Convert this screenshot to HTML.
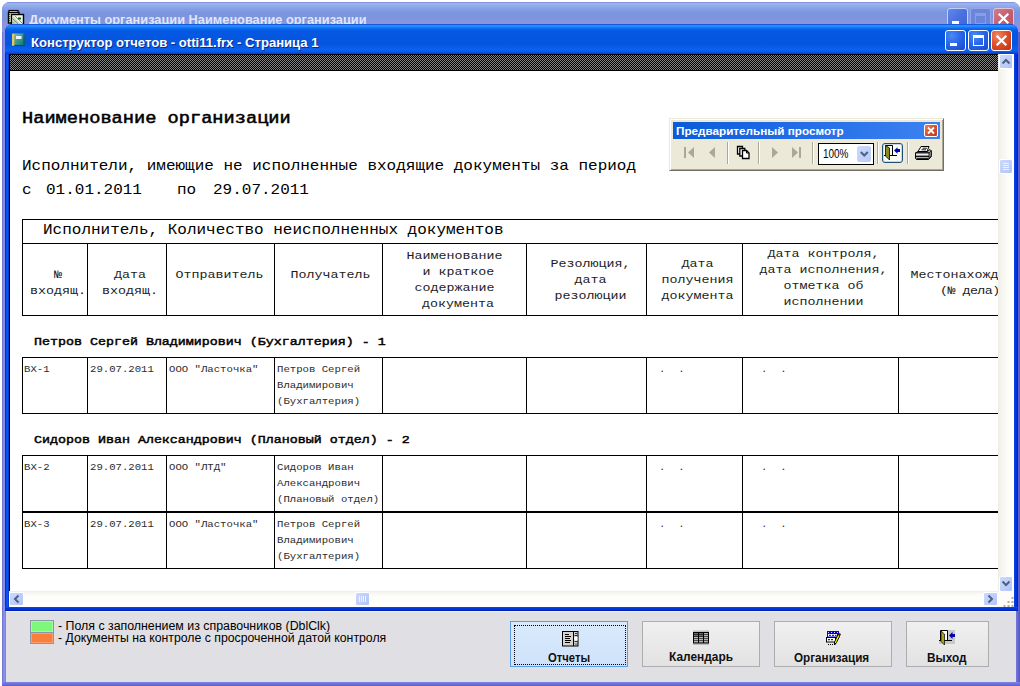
<!DOCTYPE html>
<html lang="ru">
<head>
<meta charset="utf-8">
<title>Конструктор отчетов</title>
<style>
html,body{margin:0;padding:0;background:#fff;}
body{width:1020px;height:686px;overflow:hidden;position:relative;font-family:"Liberation Sans",sans-serif;}
div,span{position:absolute;box-sizing:border-box;}
.tx{white-space:nowrap;transform-origin:0 0;line-height:1;}
.mono{font-family:"Liberation Mono",monospace;color:#000;}
/* outer window */
#ow{left:2px;top:2px;width:1018px;height:684px;border-radius:8px 8px 0 0;
 background:linear-gradient(90deg,#6a70c8 0,#8b93f0 2px,#7b80e6 4px,#7b80e6 100%);overflow:hidden;}
#owt{left:0;top:0;width:1018px;height:30px;background:linear-gradient(180deg,#7b84da 0,#9cb3ec 1.5px,#98b0ec 3px,#86a3e6 6px,#7b97e0 10px,#7d94de 16px,#8a94dc 22px,#8a94dc 30px);}
#owc{left:4px;top:609px;width:1010px;height:71px;background:#e0dfe3;}
/* inner window */
#iw{left:5px;top:24px;width:1013px;height:587px;border-radius:8px 8px 0 0;background:#0831d9;overflow:hidden;}
#iwt{left:0;top:0;width:1013px;height:30px;background:linear-gradient(180deg,#0a40c8 0,#2a8eff 1.5px,#2388fc 2.5px,#0a6af0 4.5px,#0558e2 7px,#0455df 20px,#0860ee 25px,#0a5ff0 27px,#0a48d8 29px,#0838c0 30px);}
#iwl{left:0;top:30px;width:4px;height:557px;background:linear-gradient(90deg,#0020d8 0,#0c5cee 2px,#0b4fe2 3px,#0030c8 4px);}
#iwr{left:1009px;top:30px;width:4px;height:557px;background:linear-gradient(90deg,#0c48e6 0,#0038e0 1.5px,#0030d4 2.8px,#001898 4px);}
#iwb{left:0;top:583px;width:1013px;height:4px;background:linear-gradient(180deg,#0c48e6 0,#0038e0 1.5px,#0030d4 2.8px,#001898 4px);}
#cl{left:9px;top:54px;width:1005px;height:553px;background:#fff;overflow:hidden;}

#rp{left:9px;top:54px;width:989px;height:537px;background:#fff;overflow:hidden;}
#rpi{left:-9px;top:-54px;width:1200px;height:686px;}
#band{left:9px;top:54px;width:989px;height:17px;background:repeating-conic-gradient(#000 0 25%,#828282 0 50%) 0 0/2px 2px;border-bottom:1px solid #000;border-top:1px solid #000;}
#lline{left:9px;top:54px;width:1px;height:537px;background:#000;}
.ln{background:#000;}
.f14{font-size:18.67px;font-weight:bold;}
.f12{font-size:16px;}
.f10{font-size:13.33px;}
.f10b{font-size:13.33px;font-weight:bold;}
.f8{font-size:10.67px;}
.hc{text-align:center;line-height:16px;white-space:pre;color:#1c1c1c;}
.dc{line-height:16px;white-space:pre;color:#2c2c2c;}

.cb{width:21px;height:21px;border:1px solid #fff;border-radius:3px;}
.cbb{background:radial-gradient(circle at 30% 25%,#4a8af8 0,#2a66e8 45%,#1848d0 100%);}
.cbr{background:radial-gradient(circle at 30% 25%,#f08868 0,#e0502a 45%,#c03010 100%);}
.cbbi{background:linear-gradient(135deg,#6088ec 0,#4a70e0 50%,#3f64d8 100%);border-color:#c2cff5;}
.cbri{background:linear-gradient(135deg,#d07c90 0,#c85c6c 55%,#c05262 100%);border-color:#e2c6d8;}
.ttl{font-weight:bold;font-size:13px;color:#fff;}
/* scrollbars */
#vs{left:998px;top:54px;width:16px;height:537px;background:linear-gradient(90deg,#eeede5 0,#f6f5f0 4px,#fefefb 12px,#fff 16px);}
#hs{left:9px;top:591px;width:989px;height:16px;background:linear-gradient(180deg,#ecebe4 0,#f8f7f2 2px,#fdfdfa 6px,#fefefc 16px);}
#grip{left:998px;top:591px;width:16px;height:16px;background:#fdfcf8;}
.sb{width:15px;height:15px;border-radius:2px;border:1px solid #fff;background:linear-gradient(135deg,#cbd9fd 0,#bccdfb 60%,#b0c3f6 100%);}
.sb svg{position:absolute;left:0;top:0;}

/* preview toolbar */
#tb{left:669px;top:118px;width:275px;height:53px;background:#ece9d8;border:1px solid;border-color:#ece9d8 #716f64 #716f64 #ece9d8;box-shadow:inset 1px 1px 0 #fff,inset -1px -1px 0 #aca899;}
#tbt{left:3px;top:3px;width:267px;height:17px;background:linear-gradient(90deg,#0a5cd8 0,#1f6ae6 40%,#3d82f0 100%);}
.sep{width:2px;height:22px;top:23px;border-left:1px solid #aca899;border-right:1px solid #fff;}
/* bottom panel */
.btn{top:621px;height:46px;border:1px solid #adadad;background:linear-gradient(180deg,#f0f0f0 0,#e9e9e9 50%,#e2e2e2 100%);}
.btn .bl{font-weight:bold;font-size:12px;color:#111;white-space:nowrap;line-height:1;transform-origin:0 0;}
.lg{font-size:12px;color:#000;}
</style>
</head>
<body>
<div id="ow">
 <div id="owt"></div>
 <div id="owc"></div>
 <div style="left:1014px;top:30px;width:4px;height:654px;background:linear-gradient(90deg,#7479dc 0,#6468d0 2px,#5254c2 4px)"></div>
 <div style="left:0;top:680px;width:1018px;height:4px;background:linear-gradient(180deg,#7b80e6 0,#6c72d8 2px,#5a5ecc 4px)"></div>
</div>

<!-- outer window caption -->
<svg style="position:absolute;left:7px;top:9px" width="18" height="16" viewBox="0 0 18 16">
 <rect x="2" y="1.500" width="9" height="4" fill="#f4f0d8" stroke="#000" stroke-width="1.2"/>
 <rect x="1.500" y="3.500" width="10.500" height="10.500" fill="#e8f0d8" stroke="#000" stroke-width="1.4"/>
 <path d="M2.500 5v8" stroke="#1a6a1a" stroke-width="1.200" stroke-dasharray="1 1"/>
 <rect x="4.500" y="5.500" width="12" height="10.500" fill="#eef6e4" stroke="#000" stroke-width="1.400"/>
 <path d="M5.500 8l8 8M5.500 11l5 5" stroke="#e8b8c8" stroke-width="1.500"/>
 <path d="M5.500 9.500l6.500 6.500M8 7l8 8M5.500 13l3 3" stroke="#58b058" stroke-width="1"/>
 <rect x="11" y="8.500" width="3" height="2" fill="#0a6a1a"/>
</svg>
<div class="tx ttl" id="t1" style="left:29px;top:13px;color:#dfe6fa;transform:scaleX(.984)">Документы организации Наименование организации</div>
<div class="cb cbbi" style="left:947px;top:8px"><div style="left:4px;top:12px;width:7px;height:3px;background:#fff"></div></div>
<div class="cb cbbi" style="left:970px;top:8px;background:#6a85dc;border-color:#94a6e8"><div style="left:4px;top:4px;width:11px;height:11px;border:1px solid #8a9de4;border-top-width:3px"></div></div>
<div class="cb cbri" style="left:993px;top:8px"><svg style="position:absolute;left:0;top:0" width="19" height="19"><path d="M4.700 4.700l9.600 9.600M14.300 4.700l-9.600 9.600" stroke="#fff" stroke-width="2.2"/></svg></div>
<div style="left:6px;top:611px;width:1010px;height:1px;background:#f0f0f8"></div>
<div id="iw">
 <div id="iwt"></div>
 <div id="iwl"></div><div id="iwr"></div><div id="iwb"></div>
</div>

<!-- inner window caption -->
<svg style="position:absolute;left:12px;top:33px" width="13" height="13" viewBox="0 0 13 13">
 <defs><linearGradient id="gi" x1="0" y1="0" x2="1" y2="1"><stop offset="0" stop-color="#8ab8d8"/><stop offset="0.45" stop-color="#3a9aa0"/><stop offset="1" stop-color="#0a7a50"/></linearGradient></defs>
 <rect x="2" y="0.500" width="10.500" height="12" fill="url(#gi)"/>
 <path d="M12 1v12M2 12.500h10.500" stroke="#0a4a5a" stroke-width="1"/>
 <rect x="0" y="0.500" width="2.500" height="12" fill="#c8b828"/>
 <path d="M1 1.500v11" stroke="#fff" stroke-width="1.200" stroke-dasharray="1 1"/>
 <rect x="4" y="3" width="5.500" height="3" fill="#eef0f8"/>
</svg>
<div class="tx ttl" id="t2" style="left:31px;top:35.500px;text-shadow:1px 1px 0 #0a2a90;transform:scaleX(1.007)">Конструктор отчетов - otti11.frx - Страница 1</div>
<div class="cb cbb" style="left:945px;top:30px"><div style="left:4px;top:12px;width:7px;height:3px;background:#fff"></div></div>
<div class="cb cbb" style="left:968px;top:30px"><div style="left:4px;top:4px;width:11px;height:11px;border:1px solid #fff;border-top-width:3px"></div></div>
<div class="cb cbr" style="left:991px;top:30px"><svg style="position:absolute;left:0;top:0" width="19" height="19"><path d="M4.700 4.700l9.600 9.600M14.300 4.700l-9.600 9.600" stroke="#fff" stroke-width="2.2"/></svg></div>
<div id="cl">
</div>
<!--RP-->
<div id="rp"><div id="rpi">
<div id="band"></div>
<div class="tx mono" style="left:22px;top:110.69px;font-size:16.053px;-webkit-text-stroke:0.50px #000;transform:scaleX(1.1628)">Наименование организации</div>
<div class="tx mono" style="left:22px;top:160.45px;font-size:13.760px;transform:scaleX(1.1628)">Исполнители, имеющие не исполненные входящие документы за период</div>
<div class="tx mono" style="left:22px;top:184.45px;font-size:13.760px;transform:scaleX(1.1628)">с</div>
<div class="tx mono" style="left:46px;top:184.45px;font-size:13.760px;transform:scaleX(1.1628)">01.01.2011</div>
<div class="tx mono" style="left:177px;top:184.45px;font-size:13.760px;transform:scaleX(1.1628)">по</div>
<div class="tx mono" style="left:213px;top:184.45px;font-size:13.760px;transform:scaleX(1.1628)">29.07.2011</div>
<div class="ln" style="left:22px;top:219px;width:1100px;height:1px"></div>
<div class="ln" style="left:22px;top:243px;width:1100px;height:1px"></div>
<div class="ln" style="left:22px;top:315px;width:1100px;height:1px"></div>
<div class="ln" style="left:22px;top:219px;width:1px;height:97px"></div>
<div class="ln" style="left:87px;top:243px;width:1px;height:73px"></div>
<div class="ln" style="left:166px;top:243px;width:1px;height:73px"></div>
<div class="ln" style="left:274px;top:243px;width:1px;height:73px"></div>
<div class="ln" style="left:382px;top:243px;width:1px;height:73px"></div>
<div class="ln" style="left:526px;top:243px;width:1px;height:73px"></div>
<div class="ln" style="left:646px;top:243px;width:1px;height:73px"></div>
<div class="ln" style="left:742px;top:243px;width:1px;height:73px"></div>
<div class="ln" style="left:898px;top:243px;width:1px;height:73px"></div>
<div class="tx mono" style="left:43px;top:224.45px;font-size:13.760px;transform:scaleX(1.1628)">Исполнитель, Количество неисполненных документов</div>
<div class="mono hc" style="left:26.30px;top:267.44px;width:64px;font-size:11.467px;transform:scaleX(1.1628);transform-origin:50% 0">№
входящ.</div>
<div class="mono hc" style="left:91.40px;top:267.44px;width:78px;font-size:11.467px;transform:scaleX(1.1628);transform-origin:50% 0">Дата
входящ.</div>
<div class="mono hc" style="left:165.50px;top:267.44px;width:107px;font-size:11.467px;transform:scaleX(1.1628);transform-origin:50% 0">Отправитель</div>
<div class="mono hc" style="left:276.50px;top:267.44px;width:107px;font-size:11.467px;transform:scaleX(1.1628);transform-origin:50% 0">Получатель</div>
<div class="mono hc" style="left:383.00px;top:247.64px;width:143px;font-size:11.467px;transform:scaleX(1.1628);transform-origin:50% 0">Наименование
<span style="position:relative;left:3.35px">и краткое</span>
содержание
<span style="position:relative;left:3.01px">документа</span></div>
<div class="mono hc" style="left:530.75px;top:255.94px;width:119px;font-size:11.467px;transform:scaleX(1.1628);transform-origin:50% 0">Резолюция,
дата
резолюции</div>
<div class="mono hc" style="left:650.20px;top:255.94px;width:95px;font-size:11.467px;transform:scaleX(1.1628);transform-origin:50% 0">Дата
получения
документа</div>
<div class="mono hc" style="left:746.10px;top:245.94px;width:155px;font-size:11.467px;transform:scaleX(1.1628);transform-origin:50% 0">Дата контроля,
дата исполнения,
отметка об
исполнении</div>
<div class="mono hc" style="left:899.00px;top:267.44px;width:143px;font-size:11.467px;transform:scaleX(1.1628);transform-origin:50% 0">Местонахождение
<span style="position:relative;left:-0.5px;letter-spacing:-0.45px">(№ дела)</span></div>
<div class="tx mono" style="left:34px;top:336.21px;font-size:11.467px;-webkit-text-stroke:0.45px #000;transform:scaleX(1.1628)">Петров Сергей Владимирович (Бухгалтерия) - 1</div>
<div class="tx mono" style="left:34px;top:434.21px;font-size:11.467px;-webkit-text-stroke:0.45px #000;transform:scaleX(1.1628)">Сидоров Иван Александрович (Плановый отдел) - 2</div>
<div class="ln" style="left:22px;top:357px;width:1100px;height:1px"></div>
<div class="ln" style="left:22px;top:413px;width:1100px;height:1px"></div>
<div class="ln" style="left:22px;top:357px;width:1px;height:57px"></div>
<div class="ln" style="left:87px;top:357px;width:1px;height:57px"></div>
<div class="ln" style="left:166px;top:357px;width:1px;height:57px"></div>
<div class="ln" style="left:274px;top:357px;width:1px;height:57px"></div>
<div class="ln" style="left:382px;top:357px;width:1px;height:57px"></div>
<div class="ln" style="left:526px;top:357px;width:1px;height:57px"></div>
<div class="ln" style="left:646px;top:357px;width:1px;height:57px"></div>
<div class="ln" style="left:742px;top:357px;width:1px;height:57px"></div>
<div class="ln" style="left:898px;top:357px;width:1px;height:57px"></div>
<div class="mono dc" style="left:24px;top:361.55px;font-size:9.173px;transform:scaleX(1.1628);transform-origin:0 0">ВХ-1</div>
<div class="mono dc" style="left:90px;top:361.55px;font-size:9.173px;transform:scaleX(1.1628);transform-origin:0 0">29.07.2011</div>
<div class="mono dc" style="left:169px;top:361.55px;font-size:9.173px;transform:scaleX(1.1628);transform-origin:0 0">ООО "Ласточка"</div>
<div class="mono dc" style="left:277px;top:361.55px;font-size:9.173px;transform:scaleX(1.1628);transform-origin:0 0">Петров Сергей
Владимирович
(Бухгалтерия)</div>
<div class="mono dc" style="left:659px;top:361.55px;font-size:9.173px;transform:scaleX(1.1628);transform-origin:0 0">.  .</div>
<div class="mono dc" style="left:761px;top:361.55px;font-size:9.173px;transform:scaleX(1.1628);transform-origin:0 0">.  .</div>
<div class="ln" style="left:22px;top:455px;width:1100px;height:1px"></div>
<div class="ln" style="left:22px;top:511px;width:1100px;height:1px"></div>
<div class="ln" style="left:22px;top:455px;width:1px;height:57px"></div>
<div class="ln" style="left:87px;top:455px;width:1px;height:57px"></div>
<div class="ln" style="left:166px;top:455px;width:1px;height:57px"></div>
<div class="ln" style="left:274px;top:455px;width:1px;height:57px"></div>
<div class="ln" style="left:382px;top:455px;width:1px;height:57px"></div>
<div class="ln" style="left:526px;top:455px;width:1px;height:57px"></div>
<div class="ln" style="left:646px;top:455px;width:1px;height:57px"></div>
<div class="ln" style="left:742px;top:455px;width:1px;height:57px"></div>
<div class="ln" style="left:898px;top:455px;width:1px;height:57px"></div>
<div class="mono dc" style="left:24px;top:459.55px;font-size:9.173px;transform:scaleX(1.1628);transform-origin:0 0">ВХ-2</div>
<div class="mono dc" style="left:90px;top:459.55px;font-size:9.173px;transform:scaleX(1.1628);transform-origin:0 0">29.07.2011</div>
<div class="mono dc" style="left:169px;top:459.55px;font-size:9.173px;transform:scaleX(1.1628);transform-origin:0 0">ООО "ЛТД"</div>
<div class="mono dc" style="left:277px;top:459.55px;font-size:9.173px;transform:scaleX(1.1628);transform-origin:0 0">Сидоров Иван
Александрович
(Плановый отдел)</div>
<div class="mono dc" style="left:659px;top:459.55px;font-size:9.173px;transform:scaleX(1.1628);transform-origin:0 0">.  .</div>
<div class="mono dc" style="left:761px;top:459.55px;font-size:9.173px;transform:scaleX(1.1628);transform-origin:0 0">.  .</div>
<div class="ln" style="left:22px;top:512px;width:1100px;height:1px"></div>
<div class="ln" style="left:22px;top:568px;width:1100px;height:1px"></div>
<div class="ln" style="left:22px;top:512px;width:1px;height:57px"></div>
<div class="ln" style="left:87px;top:512px;width:1px;height:57px"></div>
<div class="ln" style="left:166px;top:512px;width:1px;height:57px"></div>
<div class="ln" style="left:274px;top:512px;width:1px;height:57px"></div>
<div class="ln" style="left:382px;top:512px;width:1px;height:57px"></div>
<div class="ln" style="left:526px;top:512px;width:1px;height:57px"></div>
<div class="ln" style="left:646px;top:512px;width:1px;height:57px"></div>
<div class="ln" style="left:742px;top:512px;width:1px;height:57px"></div>
<div class="ln" style="left:898px;top:512px;width:1px;height:57px"></div>
<div class="mono dc" style="left:24px;top:516.55px;font-size:9.173px;transform:scaleX(1.1628);transform-origin:0 0">ВХ-3</div>
<div class="mono dc" style="left:90px;top:516.55px;font-size:9.173px;transform:scaleX(1.1628);transform-origin:0 0">29.07.2011</div>
<div class="mono dc" style="left:169px;top:516.55px;font-size:9.173px;transform:scaleX(1.1628);transform-origin:0 0">ООО "Ласточка"</div>
<div class="mono dc" style="left:277px;top:516.55px;font-size:9.173px;transform:scaleX(1.1628);transform-origin:0 0">Петров Сергей
Владимирович
(Бухгалтерия)</div>
<div class="mono dc" style="left:659px;top:516.55px;font-size:9.173px;transform:scaleX(1.1628);transform-origin:0 0">.  .</div>
<div class="mono dc" style="left:761px;top:516.55px;font-size:9.173px;transform:scaleX(1.1628);transform-origin:0 0">.  .</div>
</div></div>
<!--/RP-->
<div id="lline"></div>

<div id="vs">
 <div class="sb" style="left:1px;top:0px;width:14px;height:15px"><svg width="12" height="13"><path d="M2.500 8.500l3.500-3.500 3.500 3.500" fill="none" stroke="#4d6185" stroke-width="2"/></svg></div>
 <div class="sb" style="left:1px;top:105px;width:14px;height:15px"><svg width="12" height="13"><path d="M3 3.500h6M3 5.500h6M3 7.500h6M3 9.500h6" stroke="#eef4fe" stroke-width="1"/></svg></div>
 <div class="sb" style="left:1px;top:522px;width:14px;height:15.500px"><svg width="12" height="14"><path d="M2.500 4.500l3.500 3.500 3.500-3.500" fill="none" stroke="#4d6185" stroke-width="2"/></svg></div>
</div>
<div id="hs">
 <div class="sb" style="left:0px;top:1px;width:15px;height:14px"><svg width="13" height="12"><path d="M8.500 2.500l-3.500 3.500 3.500 3.500" fill="none" stroke="#4d6185" stroke-width="2"/></svg></div>
 <div class="sb" style="left:346px;top:1px;width:15px;height:14px"><svg width="13" height="12"><path d="M3.500 3v6M5.500 3v6M7.500 3v6M9.500 3v6" stroke="#eef4fe" stroke-width="1"/></svg></div>
 <div class="sb" style="left:974px;top:1px;width:15px;height:14px"><svg width="13" height="12"><path d="M4.500 2.500l3.500 3.500-3.500 3.500" fill="none" stroke="#4d6185" stroke-width="2"/></svg></div>
</div>
<div id="grip"><svg width="16" height="16"><g fill="#b4ae98"><rect x="13.500" y="6" width="2" height="2"/><rect x="9.500" y="10" width="2" height="2"/><rect x="13.500" y="10" width="2" height="2"/><rect x="5.500" y="14" width="2" height="2"/><rect x="9.500" y="14" width="2" height="2"/><rect x="13.500" y="14" width="2" height="2"/></g></svg></div>



<div id="tb">
 <div id="tbt"></div>
 <div class="tx" id="t3" style="left:6px;top:6.500px;font-weight:bold;font-size:11.500px;color:#fff;transform:scaleX(1.017)">Предварительный просмотр</div>
 <div style="left:254px;top:5px;width:14px;height:13px;border:1px solid #fff;border-radius:2px;background:linear-gradient(135deg,#e8805c 0,#d8502c 50%,#c03c18 100%)"><svg style="position:absolute;left:0;top:0" width="12" height="11"><path d="M3 2.5l6 6M9 2.5l-6 6" stroke="#fff" stroke-width="1.8"/></svg></div>
 <svg style="position:absolute;left:13px;top:27px" width="120" height="14" viewBox="0 0 120 14">
  <g fill="#aca899"><rect x="1" y="1" width="2" height="11"/><path d="M11 1v11l-6-5.500z"/><path d="M32 1v11l-6-5.500z"/>
  <path d="M89 1v11l6-5.500z"/><path d="M109 1v11l6-5.500z"/><rect x="116" y="1" width="2" height="11"/></g>
 </svg>
 <div class="sep" style="left:57px"></div>
 <svg style="position:absolute;left:66px;top:26px" width="15" height="15" viewBox="0 0 15 15">
  <path d="M1.500 1.500h5v7.500h-5z" fill="#fff" stroke="#000" stroke-width="1.300"/><path d="M3.800 3.500h5v7.500h-5z" fill="#fff" stroke="#000" stroke-width="1.300"/><path d="M6.500 5.500h4l2.500 2.500v5.500h-6.500z" fill="#fff" stroke="#000" stroke-width="1.300"/><path d="M10.500 5.500v2.500h2.500" fill="none" stroke="#000"/>
 </svg>
 <div class="sep" style="left:88px"></div>
 <div class="sep" style="left:142px"></div>
 <div style="left:148px;top:24px;width:56px;height:22px;border:1px solid #000;background:#fff">
   <div class="tx" id="t4" style="left:4px;top:4px;font-size:12px;color:#000;transform:scaleX(.83)">100%</div>
   <div style="left:37.500px;top:2px;width:14.500px;height:16px;background:linear-gradient(135deg,#cddafc 0,#b9cafa 100%);border-radius:2px"><svg style="position:absolute;left:0;top:0" width="15" height="16"><path d="M3.800 6l3.500 3.500 3.500-3.500" fill="none" stroke="#4d6185" stroke-width="2"/></svg></div>
 </div>
 <div class="sep" style="left:207px"></div>
 <div style="left:212px;top:24px;width:21px;height:20px;border:1px solid #1f4e78;border-radius:3px;background:#fcfcf6;box-shadow:inset 0 0 0 1px #c8d8e8"></div>
 <svg style="position:absolute;left:213px;top:25px" width="19" height="18" viewBox="0 0 19 18">
  <path d="M2.500 1.500H9.500V11.500M1 11.500H14" fill="none" stroke="#000"/>
  <path d="M2.500 1.500L6.500 4V16L2.500 12z" fill="#8c8c1e" stroke="#000" stroke-width="0.800"/>
  <path d="M11 6.500l3.500-3.200v1.800H17v2.800h-2.500v1.800z" fill="#0000b4"/>
 </svg>
 <div class="sep" style="left:237px"></div>
 <svg style="position:absolute;left:244px;top:26px" width="19" height="16" viewBox="0 0 19 16">
  <path d="M7 1.500h8l-2 5h-9z" fill="#fff" stroke="#000"/>
  <path d="M8.500 3.200h4.500M7.500 4.800h4.500" stroke="#000" stroke-width=".9"/>
  <path d="M1.500 8L4 6.500h9.500l2.500-2 1.300 1.500v5.500l-2.800 3h-12l-1-1z" fill="#c8c8c8" stroke="#000"/>
  <rect x="1.500" y="7.200" width="13.500" height="1.300" fill="#000"/>
  <rect x="2" y="8.700" width="12.500" height="1.800" fill="#ececec"/>
  <rect x="1.500" y="10.700" width="13.500" height="1.200" fill="#000"/>
  <rect x="2" y="12.100" width="12.500" height=".9" fill="#b0b0b0"/>
  <rect x="2.500" y="13.200" width="12" height="1.500" fill="#000"/>
  <path d="M15 8l2.300-2.300v5l-2.300 2.800z" fill="#909090" stroke="#000" stroke-width=".7"/>
 </svg>
</div>

<div style="left:30px;top:620px;width:24px;height:13px;border:1px solid #8a97a8;background:#7df87a;box-shadow:inset 0 0 0 1px rgba(255,255,255,.3)"></div>
<div style="left:30px;top:632px;width:24px;height:12px;border:1px solid #8a97a8;background:#fb7f3c;box-shadow:inset 0 0 0 1px rgba(255,255,255,.25)"></div>
<div class="tx lg" id="t5" style="left:58px;top:620px;transform:scaleX(1.030)">- Поля с заполнением из справочников (DblClk)</div>
<div class="tx lg" id="t6" style="left:58px;top:632px;transform:scaleX(1.023);background:#e0dfe3;height:13px">- Документы на контроле с просроченной датой контроля</div>
<div class="btn" style="left:510px;width:118px;border-color:#5a9de8;background:linear-gradient(180deg,#d9eafc 0,#d4e6fb 50%,#cfe2fa 100%)">
  <div style="left:3px;top:3px;width:112px;height:40px;border:1px dotted #000"></div>
  <svg style="position:absolute;left:51px;top:9px" width="17" height="16" viewBox="0 0 17 16">
   <rect x="0.500" y="0.500" width="15.500" height="14.500" fill="#d6d2ce" stroke="#000"/>
   <path d="M11.500 0v15" stroke="#000"/>
   <path d="M3 3.500h4M3 5.500h6M3 7.500h5M3 9.500h6M3 11.500h5" stroke="#000"/>
   <rect x="12.500" y="6" width="3" height="3.500" fill="#fff"/>
   <path d="M12.500 4.500h3M12.500 10.500h3" stroke="#000" stroke-width=".8"/>
   <path d="M13 3l1-1 1 1M13 12.500l1 1 1-1" stroke="#000" stroke-width=".8" fill="none"/>
  </svg>
  <div class="bl" id="b1" style="left:37px;top:30.400px;transform:scaleX(.94)">Отчеты</div>
</div>
<div class="btn" style="left:642px;width:118px"><svg style="position:absolute;left:50px;top:8px" width="17" height="16" viewBox="0 0 17 16">
   <rect x="0" y="0.500" width="16" height="1.500" fill="#bdbdbd"/><rect x="0" y="13.500" width="16" height="1.500" fill="#bdbdbd"/>
   <rect x="0" y="2" width="16" height="11.500" fill="#000"/>
   <g fill="#fff"><rect x="1" y="3.300" width="4" height="1" fill="#999"/><rect x="6" y="3.300" width="4" height="1" fill="#999"/><rect x="11" y="3.300" width="4" height="1"/>
   <rect x="1" y="5.300" width="4" height="1" fill="#999"/><rect x="6" y="5.300" width="4" height="1" fill="#999"/><rect x="11" y="5.300" width="4" height="1"/>
   <rect x="1" y="7.300" width="4" height="1"/><rect x="6" y="7.300" width="4" height="1"/><rect x="11" y="7.300" width="4" height="1"/>
   <rect x="1" y="9.300" width="4" height="1"/><rect x="6" y="9.300" width="4" height="1"/><rect x="11" y="9.300" width="4" height="1"/>
   <rect x="1" y="11.300" width="4" height="1"/><rect x="6" y="11.300" width="4" height="1"/><rect x="11" y="11.300" width="4" height="1"/></g>
  </svg><div class="bl" id="b2" style="left:25.500px;top:29.300px;transform:scaleX(.993)">Календарь</div></div>
<div class="btn" style="left:774px;width:118px"><svg style="position:absolute;left:51px;top:9px" width="16" height="16" viewBox="0 0 16 16">
   <rect x="1" y="0" width="12" height="6.500" fill="#0000f0"/>
   <g fill="#d8d8f8"><rect x="2" y="1" width="1" height="1"/><rect x="5" y="1" width="1" height="1"/><rect x="8" y="1" width="1" height="1"/><rect x="11" y="1" width="1" height="1"/></g>
   <rect x="2" y="3" width="9" height="2.500" fill="#fff"/><path d="M3 4.300h2M6 4.300h2M9 4.300h1.500" stroke="#000"/>
   <rect x="0.500" y="6.500" width="9" height="4.500" fill="#fff" stroke="#000"/><path d="M2 8.700h2M5 8.700h2" stroke="#000"/>
   <g fill="#000"><rect x="2" y="13" width="1" height="1"/><rect x="4" y="13" width="1" height="1"/><rect x="6" y="13" width="1" height="1"/></g>
   <path d="M12 3.500l2 1-3.500 7-2 2.500 0-3z" fill="#f0f000" stroke="#000" stroke-width=".9"/>
   <path d="M11.800 3.300l2.200 1 .6-1.200-2.200-1z" fill="#d00000" stroke="#000" stroke-width=".6"/>
   <path d="M8.500 14l0-2.500 1.800 1z" fill="#000"/>
  </svg><div class="bl" id="b3" style="left:19.400px;top:30.400px;transform:scaleX(.974)">Организация</div></div>
<div class="btn" style="left:906px;width:83px"><svg style="position:absolute;left:32px;top:8px" width="17" height="16" viewBox="0 0 17 16">
   <rect x="9" y="0" width="7" height="14" fill="#c8c8c8"/><rect x="0" y="10.500" width="9" height="3.500" fill="#c8c8c8"/>
   <rect x="1.500" y="0.500" width="7" height="10" fill="#fff"/>
   <path d="M1.500 10V0.500H8.500V10M0 10.500H13" fill="none" stroke="#000"/>
   <path d="M2 1L5.500 4V15L2 11.500z" fill="#a4a414" stroke="#000" stroke-width=".7"/>
   <path d="M10 5.500l3.500-3.500v2H16v3h-2.500v2z" fill="#0000a8"/>
  </svg><div class="bl" id="b4" style="left:20px;top:30.400px;transform:scaleX(.985)">Выход</div></div>
</body>
</html>
